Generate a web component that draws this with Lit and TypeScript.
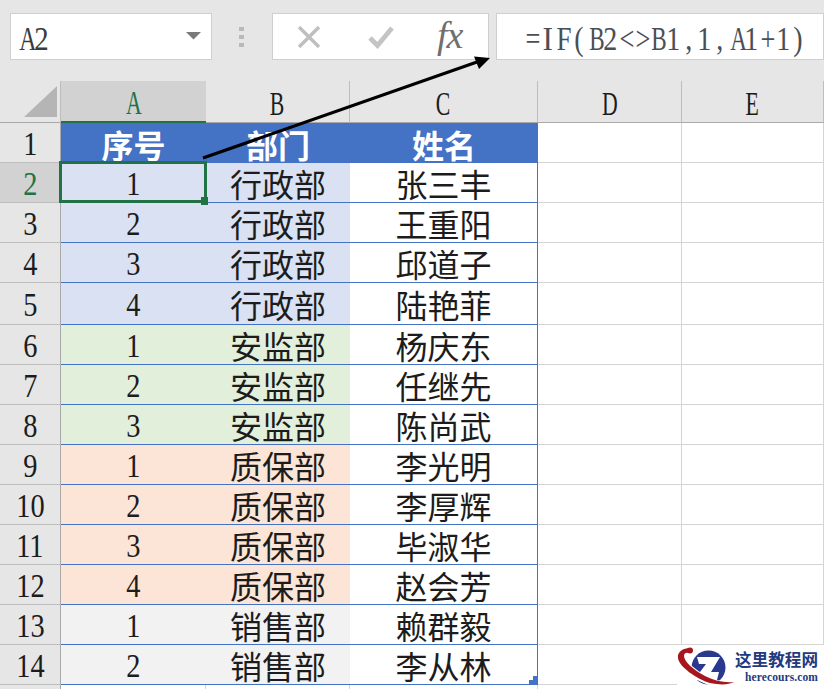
import { LitElement, html, css, svg } from "lit";
import { customElement } from "lit/decorators.js";

type Row = { n: string; dept: string; name: string; tone: string };

const rows: Row[] = [
  { n: "1", dept: "行政部", name: "张三丰", tone: "blue" },
  { n: "2", dept: "行政部", name: "王重阳", tone: "blue" },
  { n: "3", dept: "行政部", name: "邱道子", tone: "blue" },
  { n: "4", dept: "行政部", name: "陆艳菲", tone: "blue" },
  { n: "1", dept: "安监部", name: "杨庆东", tone: "green" },
  { n: "2", dept: "安监部", name: "任继先", tone: "green" },
  { n: "3", dept: "安监部", name: "陈尚武", tone: "green" },
  { n: "1", dept: "质保部", name: "李光明", tone: "orange" },
  { n: "2", dept: "质保部", name: "李厚辉", tone: "orange" },
  { n: "3", dept: "质保部", name: "毕淑华", tone: "orange" },
  { n: "4", dept: "质保部", name: "赵会芳", tone: "orange" },
  { n: "1", dept: "销售部", name: "赖群毅", tone: "gray" },
  { n: "2", dept: "销售部", name: "李从林", tone: "gray" },
];

const mono = (t: string) =>
  [...t].map((c) => {
    let cls = "ch";
    if (c === "I") cls = "ch wide";
    else if (c === "F") cls = "ch eff";
    else if (/[A-Z]/.test(c)) cls = "ch up";
    else if (/[<>=+]/.test(c)) cls = "ch sym";
    return html`<span class=${cls}>${c}</span>`;
  });

@customElement("app-root")
export class AppRoot extends LitElement {
  static styles = css`
    :host {
      display: block;
      width: 824px;
      height: 689px;
      overflow: hidden;
      position: relative;
      background: #fff;
      font-family: "Liberation Serif", "Noto Sans CJK SC", serif;
      color: #1c1c1c;
    }
    .ch {
      display: inline-block;
      width: 15.68px;
      text-align: center;
      transform: scaleX(0.85);
    }
    .ch.up { transform: scaleX(0.7); }
    .ch.eff { transform: scaleX(0.82); }
    .ch.wide { transform: scaleX(0.95); }
    .ch.sym { transform: scaleX(0.8); }

    .top {
      height: 81px;
      box-sizing: border-box;
      background: #e6e6e6;
      display: flex;
      padding: 13px 0 21px 10px;
    }
    .box {
      box-sizing: border-box;
      background: #fff;
      border: 1px solid #cfcfcf;
      display: flex;
      align-items: center;
    }
    .name {
      width: 202px;
      padding: 4px 9px 0 6px;
      justify-content: space-between;
      font-size: 34px;
      color: #3c3c3c;
    }
    .name svg { margin-top: -6px; }
    .grip {
      width: 60px;
      display: flex;
      justify-content: center;
      align-items: center;
    }
    .fnbtns {
      width: 217px;
      padding-left: 24px;
    }
    .btn-x { margin-right: 47px; }
    .btn-ok { margin-right: 43px; }
    .fx {
      font-family: "Liberation Serif", serif;
      font-style: italic;
      font-weight: 400;
      font-size: 38px;
      letter-spacing: -1px;
      color: #6f6f6f;
      margin-top: -4px;
    }
    .formula {
      flex: 1;
      margin-left: 7px;
      padding: 5px 0 0 27px;
      font-size: 33px;
      color: #4a4f55;
      white-space: nowrap;
    }

    .headrow, .grid {
      display: grid;
      grid-template-columns: 61px 145px 144px 188px 144px 142px;
    }
    .grid {
      grid-template-rows: 40px 40px 40px 40px 42px 40px 40px 40px 40px 40px 40px 40px 40px 40px 24px;
      background: #fff;
    }
    .cell, .ch-head, .rh {
      box-sizing: border-box;
      display: flex;
      align-items: center;
      justify-content: center;
      line-height: 34px;
    }
    .ch-head {
      background: #e6e6e6;
      height: 42px;
      font-size: 33px;
      border-right: 1px solid #bdbdbd;
      border-bottom: 1px solid #a9a9a9;
      padding-top: 4px;
    }
    .ch-head span { display: inline-block; transform: scaleX(0.66); }
    .ch-head.sel {
      background: #d2d2d2;
      color: #217346;
      border-bottom: 2px solid #217346;
      border-right: none;
    }
    .corner {
      background: #e6e6e6;
      height: 42px;
      box-sizing: border-box;
      border-right: 1px solid #bdbdbd;
      border-bottom: 1px solid #a9a9a9;
      padding: 5px 0 0 24px;
    }
    .rh {
      background: #e6e6e6;
      font-size: 33px;
      border-right: 1px solid #a9a9a9;
      border-bottom: 1px solid #bdbdbd;
      padding-top: 3px;
    }
    .rh span { display: inline-block; transform: scaleX(0.86); }
    .rh.sel { background: #d2d2d2; color: #217346; }
    .cell {
      font-size: 32px;
      font-family: "Noto Sans CJK SC", sans-serif;
      font-weight: 400;
      border-bottom: 1px solid #4472c4;
      padding-top: 1px;
      position: relative;
    }
    .num { font-family: "Liberation Serif", serif; font-size: 33px; padding-top: 3px; }
    .num span { display: inline-block; transform: scaleX(0.86); }
    .head {
      background: #4472c4;
      color: #fff;
      font-weight: 700;
      border-bottom: none;
    }
    .name-col { border-right: 1px solid #4472c4; }
    .blue { background: #d9e1f2; }
    .green { background: #e2efda; }
    .orange { background: #fce4d6; }
    .gray { background: #f2f2f2; }
    .white { background: #fff; }
    .empty {
      border-right: 1px solid #d4d4d4;
      border-bottom: 1px solid #d4d4d4;
    }
    .selected::after {
      content: "";
      position: absolute;
      inset: -2px -1px -1px -2px;
      border: 3px solid #217346;
      pointer-events: none;
      z-index: 2;
    }
    .handle {
      position: absolute;
      right: -2px;
      bottom: -3px;
      width: 7px;
      height: 8px;
      background: #217346;
      z-index: 3;
    }
    .corner-mark {
      position: absolute;
      right: 0;
      bottom: 0;
      width: 8px;
      height: 8px;
      background: #4472c4;
      clip-path: polygon(100% 0, 100% 100%, 0 100%, 0 50%, 50% 50%, 50% 0);
    }
    .arrow {
      position: absolute;
      left: 0;
      top: 0;
      z-index: 5;
      pointer-events: none;
    }
    .logo {
      position: absolute;
      right: 0;
      bottom: 0;
      width: 147px;
      height: 44px;
      background: #fff;
      z-index: 4;
      display: flex;
      align-items: flex-start;
    }
    .logo svg { flex: none; }
    .logo-text {
      display: flex;
      flex-direction: column;
      align-items: flex-end;
      width: 83px;
      color: #23397f;
      font-weight: 700;
      line-height: 1;
      padding-top: 4px;
    }
    .logo-cn {
      font-family: "Noto Sans CJK SC", sans-serif;
      font-size: 16.6px;
      line-height: 20px;
    }
    .logo-en {
      font-family: "Liberation Serif", serif;
      font-size: 11.5px;
      letter-spacing: 0.1px;
      margin-top: 3px;
      white-space: nowrap;
    }
  `;

  render() {
    return html`
      <div class="top">
        <div class="box name">
          <span>${mono("A2")}</span>
          <svg width="16" height="9" viewBox="0 0 16 9"><path d="M0 1H15L7.5 8.5Z" fill="#7a7a7a"/></svg>
        </div>
        <div class="grip">
          <svg width="6" height="22" viewBox="0 0 6 22"><path d="M0 1h5v4H0zM0 9h5v4H0zM0 17h5v4H0z" fill="#b9b9b9"/></svg>
        </div>
        <div class="box fnbtns">
          <svg class="btn-x" width="24" height="22" viewBox="0 0 24 22"><path d="M2 1L22 21M22 1L2 21" stroke="#bfbfbf" stroke-width="3.4" fill="none"/></svg>
          <svg class="btn-ok" width="26" height="24" viewBox="0 0 26 24"><path d="M2 13L9.5 20.5L24 3" stroke="#c4c4c4" stroke-width="4.8" fill="none"/></svg>
          <span class="fx">fx</span>
        </div>
        <div class="box formula"><span>${mono("=IF(B2<>B1,1,A1+1)")}</span></div>
      </div>

      <div class="headrow">
        <div class="corner">
          <svg width="34" height="32" viewBox="0 0 34 32"><path d="M33 0V31H0Z" fill="#b5b5b5"/></svg>
        </div>
        <div class="ch-head sel"><span>A</span></div>
        <div class="ch-head"><span>B</span></div>
        <div class="ch-head"><span>C</span></div>
        <div class="ch-head"><span>D</span></div>
        <div class="ch-head"><span>E</span></div>
      </div>

      <div class="grid">
        <div class="rh"><span>1</span></div>
        <div class="cell head">序号</div>
        <div class="cell head">部门</div>
        <div class="cell head">姓名</div>
        <div class="cell empty"></div>
        <div class="cell empty"></div>
        ${rows.map(
          (r, i) => html`
            <div class="rh ${i === 0 ? "sel" : ""}"><span>${i + 2}</span></div>
            <div class="cell num ${r.tone} ${i === 0 ? "selected" : ""}">
              <span>${r.n}</span>${i === 0 ? html`<i class="handle"></i>` : ""}
            </div>
            <div class="cell ${r.tone}">${r.dept}</div>
            <div class="cell name-col white">
              ${r.name}${i === rows.length - 1 ? html`<i class="corner-mark"></i>` : ""}
            </div>
            <div class="cell empty"></div>
            <div class="cell empty"></div>
          `
        )}
        <div class="rh"></div>
        <div class="cell empty"></div>
        <div class="cell empty"></div>
        <div class="cell empty"></div>
        <div class="cell empty"></div>
        <div class="cell empty"></div>
      </div>

      <svg class="arrow" width="824" height="689" viewBox="0 0 824 689">
        ${svg`<path d="M203 158L477 62" stroke="#000" stroke-width="3.2" fill="none"/>
        <path d="M490 58L474 56.5L479 69Z" fill="#000"/>`}
      </svg>

      <div class="logo">
        <svg width="58" height="44" viewBox="0 0 58 44">
          <circle cx="31.5" cy="22.5" r="17" fill="#28398f"/>
          <path d="M20 12H43L34 27H42L40 35H17L29 19H22Z" fill="#fff"/>
          <path d="M11 2C4 3 0 8 1 13C3 23 20 35 34 39C42 41 52 41 57 38C49 39 39 37 30 33C17 26 7 17 7 12C7 9 10 7 14 8C17 7 16 2 11 2Z" fill="#fff" stroke="#fff" stroke-width="3"/>
          <path d="M13 3C6 3 0 7 1 13C2 22 20 34 33 38C42 40 52 40 57 37C48 38 38 36 28 31C16 25 7 16 7 11C7 8 9 7 13 8Z" fill="#a8161d"/>
          <circle cx="13" cy="5.5" r="3" fill="#a8161d"/>
        </svg>
        <div class="logo-text">
          <span class="logo-cn">这里教程网</span>
          <span class="logo-en">herecours.com</span>
        </div>
      </div>
    `;
  }
}
